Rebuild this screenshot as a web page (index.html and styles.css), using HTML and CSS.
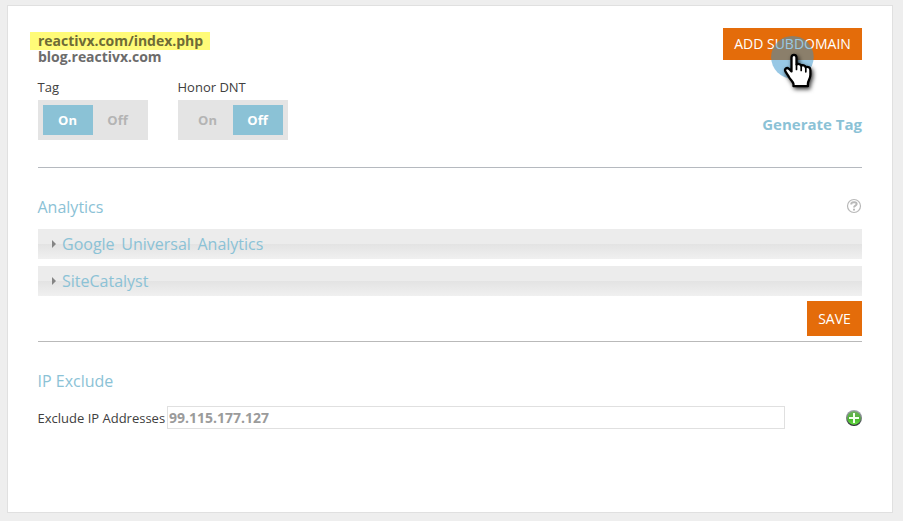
FILE: index.html
```html
<!DOCTYPE html>
<html lang="en">
<head>
<meta charset="utf-8">
<title>Domain settings</title>
<link rel="stylesheet" href="styles.css">
</head>
<body>
<main class="panel">
  <section class="domain">
    <div class="domain-info">
      <div class="names">
        <div class="name"><span class="marked">reactivx.com/index.php</span></div>
        <div class="name">blog.reactivx.com</div>
      </div>
      <div class="switches">
        <div class="field">
          <div class="label">Tag</div>
          <div class="switch"><span class="option active">On</span><span class="option">Off</span></div>
        </div>
        <div class="field">
          <div class="label">Honor DNT</div>
          <div class="switch"><span class="option">On</span><span class="option active">Off</span></div>
        </div>
      </div>
    </div>
    <div class="actions">
      <button class="button add">ADD SUBDOMAIN</button>
      <a class="generate">Generate Tag</a>
      <svg class="pointer" width="62" height="70" viewBox="0 0 62 70">
        <defs><filter id="shadow" x="-30%" y="-30%" width="170%" height="170%"><feDropShadow dx="1.500" dy="2" stdDeviation="2" flood-color="#000" flood-opacity=".8"/></filter></defs>
        <circle cx="22.400" cy="23.200" r="21.300" fill="#3192cc" fill-opacity=".5"/>
        <path filter="url(#shadow)" d="M21.500 23.500c0-3.600 5-3.600 5 0v7c1.200-1 4-.6 4.600 1.100 1.400-.8 4-.2 4.500 1.500 2.300-.8 4.800.4 4.800 3.200v4.500c0 4.200-2.300 5.500-2.500 9v2.400H23.500v-2.200c-.8-3.300-3.300-4.200-4.700-7.400l-3.300-4.900c-1.500-3 1.300-4.600 3.400-2.900l2.600 2.600z" fill="#fff" stroke="#000" stroke-width="2.300" stroke-linejoin="round"/>
        <path d="M26.500 30.500v5M31.200 32v4.500M35.800 33.500v4.300" stroke="#000" stroke-width="1.700" stroke-linecap="round"/>
      </svg>
    </div>
  </section>
  <section class="analytics">
    <div class="heading-row">
      <h2>Analytics</h2>
      <svg class="help" width="16" height="16" viewBox="0 0 16 16" fill="none" stroke="#b8b8b8">
        <circle cx="8" cy="8" r="6.500" stroke-width="1.200"/>
        <path d="M5.300 6.600V5.300C6.500 3.700 10.700 3.800 10.700 6c0 1.700-2.700 1.600-2.700 3.500" stroke-width="1.900"/>
        <path d="M8 10.700v1.900" stroke-width="2"/>
      </svg>
    </div>
    <div class="bar wide-words"><i class="arrow"></i>Google Universal Analytics</div>
    <div class="bar"><i class="arrow"></i>SiteCatalyst</div>
    <button class="button save">SAVE</button>
  </section>
  <section class="exclude">
    <h2>IP Exclude</h2>
    <div class="ip-row">
      <label class="ip-label" for="ip">Exclude IP Addresses</label>
      <input id="ip" class="ip-input" value="99.115.177.127">
      <svg class="plus" width="16" height="16" viewBox="0 0 16 16">
        <defs>
          <linearGradient id="rim" x2="0" y2="1"><stop stop-color="#a4a9b3"/><stop offset=".55" stop-color="#747b7b"/><stop offset="1" stop-color="#20242b"/></linearGradient>
          <linearGradient id="green" x2="0" y2="1"><stop stop-color="#70ad60"/><stop offset=".6" stop-color="#49b92d"/><stop offset="1" stop-color="#68dc43"/></linearGradient>
        </defs>
        <circle cx="8" cy="8" r="8" fill="url(#rim)"/>
        <circle cx="8" cy="8" r="6.700" fill="url(#green)"/>
        <path d="M8 3v10M3 8h10" stroke="#f4fff0" stroke-width="2"/>
      </svg>
    </div>
  </section>
</main>
</body>
</html>
```
FILE: styles.css
```css
* { box-sizing: border-box; }
body {
  margin: 0;
  padding: 5px 10px 8px 7px;
  background: #eee;
  color: #404040;
  font: 13px/20px "Open Sans", sans-serif;
}
.panel {
  height: 508px;
  padding: 22px 30px 0;
  background: #fff;
  border: 1px solid #e0e0e0;
}
.domain {
  display: flex;
  justify-content: space-between;
  height: 140px;
  border-bottom: 1px solid #b5b9bf;
}
.names { padding-top: 5px; }
.name {
  height: 16px;
  color: #6c6c6c;
  font-size: 14px;
  font-weight: 700;
  letter-spacing: -.03px;
  line-height: 16px;
}
.marked {
  display: block;
  width: 180px;
  height: 16px;
  margin-left: -8px;
  padding-left: 8px;
  background: #fffb78;
  box-shadow: 0 -1px #fffb78, 0 1px #fffb78;
  color: #6e6b36;
}
.switches { display: flex; gap: 30px; margin-top: 12px; }
.field { width: 110px; }
.label { height: 23px; text-indent: -.5px; white-space: nowrap; }
.switch { display: flex; height: 40px; padding: 5px; background: #e4e4e4; }
.option {
  width: 50px;
  padding-right: 1px;
  color: #b4b4b4;
  font-weight: 700;
  line-height: 30px;
  text-align: center;
}
.option.active { background: #8bc2d6; color: #fff; }
.actions {
  position: relative;
  display: flex;
  flex-direction: column;
  align-items: flex-end;
}
.button {
  padding: 0;
  border: 0;
  background: #e46c0a;
  color: #fff;
  font: 14px/32px "Open Sans", sans-serif;
}
.add { width: 139px; height: 32px; }
.generate {
  margin-top: 53px;
  color: #8bc2d6;
  font-size: 15px;
  font-weight: 700;
  line-height: 22px;
}
.pointer { position: absolute; top: 6px; left: 47px; }
.analytics {
  display: flex;
  flex-direction: column;
  height: 174px;
  border-bottom: 1px solid #b9b9b9;
}
.heading-row {
  display: flex;
  align-items: flex-end;
  justify-content: space-between;
  height: 22px;
  margin: 28px 0 11px;
}
.help { margin-bottom: 4px; }
h2 {
  margin: 0;
  color: #8bc2d6;
  font-size: 16px;
  font-weight: 400;
  line-height: 22px;
  text-indent: -.5px;
}
.bar {
  display: flex;
  align-items: center;
  gap: 6px;
  height: 30px;
  margin-bottom: 7px;
  padding-left: 14px;
  background: linear-gradient(#ececec 50%, #e3e3e3 50%, #f0f0f0);
  color: #8bc2d6;
  font-size: 16px;
}
.wide-words { word-spacing: 2.5px; }
.arrow {
  border: 4px solid transparent;
  border-left: 4.500px solid #858585;
  border-right-width: 0;
}
.save { width: 55px; height: 35px; margin-top: -2px; align-self: flex-end; line-height: 35px; }
.exclude { padding-top: 28px; }
.ip-row { display: flex; align-items: center; height: 23px; margin-top: 14px; }
.ip-label { width: 129px; text-indent: -.5px; white-space: nowrap; }
.ip-input {
  width: 618px;
  height: 23px;
  padding: 0 1px;
  border: 1px solid #e0e0e0;
  background: #fff;
  color: #9b9b9b;
  font: 700 14px/20px "Open Sans", sans-serif;
}
.plus { margin-left: auto; }
```
